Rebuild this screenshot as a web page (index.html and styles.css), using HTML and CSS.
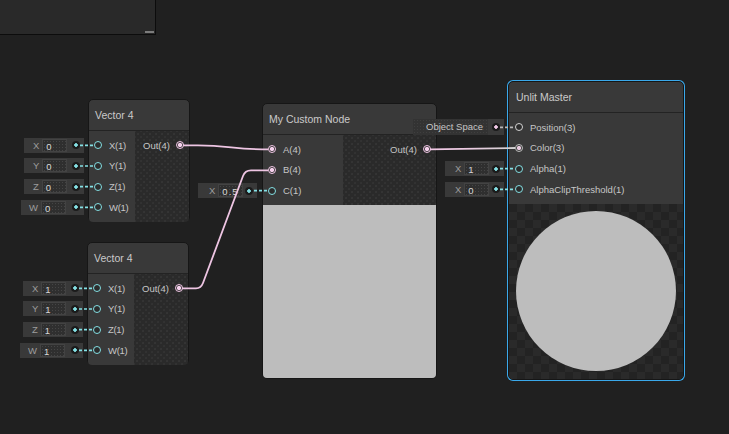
FILE: index.html
```html
<!DOCTYPE html>
<html>
<head>
<meta charset="utf-8">
<link rel="stylesheet" href="styles.css">
</head>
<body>
<div class="graph">
  <div class="blackboard"><span class="grip"></span></div>

  <div class="node vec vec-a">
    <div class="node-title">Vector 4</div>
    <div class="node-body">
      <div class="col-in vec-in">
        <div class="row"><div class="field"><span class="fx">X</span><span class="fv">0</span><span class="fdot"></span></div><span class="port f"></span><span class="lbl">X(1)</span></div>
        <div class="row"><div class="field"><span class="fx">Y</span><span class="fv">0</span><span class="fdot"></span></div><span class="port f"></span><span class="lbl">Y(1)</span></div>
        <div class="row"><div class="field"><span class="fx">Z</span><span class="fv">0</span><span class="fdot"></span></div><span class="port f"></span><span class="lbl">Z(1)</span></div>
        <div class="row"><div class="field w"><span class="fx">W</span><span class="fv">0</span><span class="fdot"></span></div><span class="port f"></span><span class="lbl">W(1)</span></div>
      </div>
      <div class="col-out">
        <div class="row"><span class="lbl">Out(4)</span><span class="port v"></span></div>
      </div>
    </div>
  </div>

  <div class="node vec vec-b">
    <div class="node-title">Vector 4</div>
    <div class="node-body">
      <div class="col-in vec-in">
        <div class="row"><div class="field"><span class="fx">X</span><span class="fv">1</span><span class="fdot"></span></div><span class="port f"></span><span class="lbl">X(1)</span></div>
        <div class="row"><div class="field"><span class="fx">Y</span><span class="fv">1</span><span class="fdot"></span></div><span class="port f"></span><span class="lbl">Y(1)</span></div>
        <div class="row"><div class="field"><span class="fx">Z</span><span class="fv">1</span><span class="fdot"></span></div><span class="port f"></span><span class="lbl">Z(1)</span></div>
        <div class="row"><div class="field w"><span class="fx">W</span><span class="fv">1</span><span class="fdot"></span></div><span class="port f"></span><span class="lbl">W(1)</span></div>
      </div>
      <div class="col-out">
        <div class="row"><span class="lbl">Out(4)</span><span class="port v"></span></div>
      </div>
    </div>
  </div>

  <div class="node custom">
    <div class="node-title">My Custom Node</div>
    <div class="node-body">
      <div class="col-in custom-in">
        <div class="row"><span class="port v"></span><span class="lbl">A(4)</span></div>
        <div class="row"><span class="port v"></span><span class="lbl">B(4)</span></div>
        <div class="row"><div class="field"><span class="fx">X</span><span class="fv">0.5</span><span class="fdot"></span></div><span class="port f"></span><span class="lbl">C(1)</span></div>
      </div>
      <div class="col-out">
        <div class="row"><span class="lbl">Out(4)</span><span class="port v"></span></div>
      </div>
    </div>
    <div class="preview"></div>
  </div>

  <div class="node master">
    <div class="node-title">Unlit Master</div>
    <div class="node-body">
      <div class="col-in master-in">
        <div class="row"><div class="field sel"><span class="fsel">Object Space</span><span class="fdot pk"></span></div><span class="port p"></span><span class="lbl">Position(3)</span></div>
        <div class="row"><span class="port c"></span><span class="lbl">Color(3)</span></div>
        <div class="row"><div class="field"><span class="fx">X</span><span class="fv">1</span><span class="fdot"></span></div><span class="port f"></span><span class="lbl">Alpha(1)</span></div>
        <div class="row"><div class="field"><span class="fx">X</span><span class="fv">0</span><span class="fdot"></span></div><span class="port f"></span><span class="lbl">AlphaClipThreshold(1)</span></div>
      </div>
    </div>
    <div class="preview checker"><div class="sphere"></div></div>
  </div>

  <svg class="wires" width="729" height="434" viewBox="0 0 729 434">
    <defs>
      <linearGradient id="colgrad" x1="430" y1="0" x2="515" y2="0" gradientUnits="userSpaceOnUse">
        <stop offset="0" stop-color="#efc6e3"/>
        <stop offset="0.45" stop-color="#eccbe2"/>
        <stop offset="1" stop-color="#d0d0d0"/>
      </linearGradient>
    </defs>
    <g class="dash cyan">
      <line x1="80" y1="145.33" x2="94" y2="145.33"/>
      <line x1="80" y1="166" x2="94" y2="166"/>
      <line x1="80" y1="186.67" x2="94" y2="186.67"/>
      <line x1="80" y1="207.33" x2="94" y2="207.33"/>
      <line x1="79" y1="288.33" x2="93" y2="288.33"/>
      <line x1="79" y1="309" x2="93" y2="309"/>
      <line x1="79" y1="329.67" x2="93" y2="329.67"/>
      <line x1="79" y1="350.33" x2="93" y2="350.33"/>
      <line x1="254" y1="190.67" x2="268" y2="190.67"/>
      <line x1="500" y1="168.67" x2="515" y2="168.67"/>
      <line x1="500" y1="189.33" x2="515" y2="189.33"/>
    </g>
    <g class="dash grey">
      <line x1="500" y1="127.33" x2="515" y2="127.33"/>
    </g>
    <g class="wire">
      <path d="M183 145.3 L198 145.3 C228 145.3 234 149.3 262 149.3 L268 149.3"/>
      <path d="M182 288.3 L196 288.3 Q201 288.3 203 283 L243 176 Q245 170.3 251 170.3 L268 170.3"/>
    </g>
    <path class="wire-col" d="M430 149.3 L515 148"/>
  </svg>
</div>
</body>
</html>
```
FILE: styles.css
```css
* { box-sizing: border-box; }
html, body { margin: 0; padding: 0; background: #202020; }
body { font-family: "Liberation Sans", Arial, sans-serif; color: #c4c4c4; }

.graph {
  position: relative;
  width: 729px;
  height: 434px;
  overflow: hidden;
  background: #202020;
}

.blackboard {
  position: absolute;
  left: 0;
  top: 0;
  width: 156px;
  height: 35px;
  background: #292929;
  border-right: 1px solid #0c0c0c;
  border-bottom: 1px solid #0c0c0c;
}
.grip {
  position: absolute;
  right: 1px;
  bottom: 1px;
  width: 9px;
  height: 2px;
  background: #7c7c7c;
}

.node {
  position: absolute;
  display: flex;
  flex-direction: column;
  background: #393939;
  border: 1px solid #161616;
  border-radius: 5px;
}
.vec { width: 102px; height: 123px; }
.vec-a { left: 88px; top: 99px; }
.vec-b { left: 87px; top: 242px; }
.custom { left: 262px; top: 103px; width: 175px; height: 276px; }
.master {
  left: 508px; top: 81px; width: 176px; height: 299px;
  box-shadow: 0 0 0 1px #3aa8ea;
}

.node-title {
  flex: none;
  height: 31px;
  border-bottom: 1px solid #232323;
  padding-left: 6px;
  display: flex;
  align-items: center;
  font-size: 10.5px;
  color: #cacaca;
  border-radius: 4px 4px 0 0;
}
.master .node-title { padding-left: 7px; }

.node-body { display: flex; flex: none; }
.vec .node-body { flex: 1; }

.col-in { padding: 4px 0; background: #393939; border-radius: 0 0 0 4px; }
.vec-in { width: 46px; }
.custom-in { width: 80px; border-radius: 0; }
.master-in { flex: 1; border-radius: 0; }

.col-out {
  flex: 1;
  padding: 4px 0;
  background-color: #2a2a2a;
  background-image:
    radial-gradient(circle, #343434 0.7px, transparent 1px),
    radial-gradient(circle, #323232 0.7px, transparent 1px);
  background-size: 6px 6px;
  background-position: 0 0, 3px 3px;
  border-radius: 0 0 4px 0;
}
.custom .col-out { border-radius: 0; }

.row {
  position: relative;
  height: 20.67px;
  display: flex;
  align-items: center;
  gap: 7px;
  font-size: 9.5px;
  white-space: nowrap;
  color: #c6c6c6;
}
.col-in .row { padding-left: 5px; }
.master-in .row { padding-left: 6px; }
.col-out .row { justify-content: flex-end; padding-right: 5px; gap: 6px; }
.vec-in .lbl { letter-spacing: -0.3px; }

.port {
  flex: none;
  width: 8px;
  height: 8px;
  border-radius: 50%;
  border: 1.5px solid #84e0e4;
  background: #2c2c2c;
}
.port.f { border-color: #84e0e4; }
.port.v {
  border-color: #efc4e4;
  background: radial-gradient(circle, #f5d0ec 0 1.8px, #3a3a3a 2.4px);
}
.port.p { border-color: #d4d4d4; }
.port.c {
  border-color: #bdbdbd;
  background: radial-gradient(circle, #e8cadf 0 1.8px, #3a3a3a 2.4px);
}

.field {
  position: absolute;
  right: calc(100% + 5px);
  top: 2.8px;
  width: 60px;
  height: 15px;
  display: flex;
  align-items: center;
  background: #393939;
  padding: 0 4px 0 9px;
  font-size: 9.5px;
  color: #9d9d9d;
}
.field.w { width: 63px; padding-left: 8px; }
.custom-in .field { right: calc(100% + 6px); width: 59px; padding-left: 11px; }
.master-in .field { right: calc(100% + 5px); width: 59px; padding-left: 10px; }
.master-in .field.sel { width: 91px; height: 16px; top: 2.3px; padding-left: 0; }

.fv {
  margin-left: 3px;
  width: 25px;
  height: 13px;
  line-height: 13px;
  padding-left: 3px;
  color: #d8d8d8;
  background-color: #2f2f2f;
  border: 1px solid #434343;
  background-image: radial-gradient(circle, #454545 0.6px, transparent 0.9px);
  background-size: 3px 3px;
}
.custom-in .fv { letter-spacing: 1px; }
.fsel {
  width: 75px;
  height: 16px;
  line-height: 16px;
  padding-left: 13px;
  color: #c6c6c6;
  background-color: #333333;
  background-image: radial-gradient(circle, #3f3f3f 0.6px, transparent 0.9px);
  background-size: 3px 3px;
}
.fdot {
  flex: none;
  margin-left: auto;
  width: 8px;
  height: 8px;
  border-radius: 50%;
  background: radial-gradient(circle, #84e0e4 0 1.5px, #1b1b1b 2px);
}
.fdot.pk { background: radial-gradient(circle, #f0c8e6 0 1.5px, #1b1b1b 2px); }

.preview {
  flex: 1;
  background: #bdbdbd;
  border-radius: 0 0 4px 4px;
}
.checker {
  display: flex;
  align-items: center;
  justify-content: center;
  background: repeating-conic-gradient(#2a2a2a 0 25%, #232323 0 50%) 0 0 / 16px 16px;
}
.sphere {
  width: 160px;
  height: 160px;
  border-radius: 50%;
  background: #bdbdbd;
}

.wires {
  position: absolute;
  left: 0;
  top: 0;
  pointer-events: none;
}
.dash line { stroke-width: 1.6; stroke-dasharray: 3 2; }
.dash.cyan line { stroke: #84e0e4; }
.dash.grey line { stroke: #b8b8b8; }
.wire path { fill: none; stroke: #eec5e3; stroke-width: 1.8; }
.wire-col { fill: none; stroke: url(#colgrad); stroke-width: 1.8; }
```
